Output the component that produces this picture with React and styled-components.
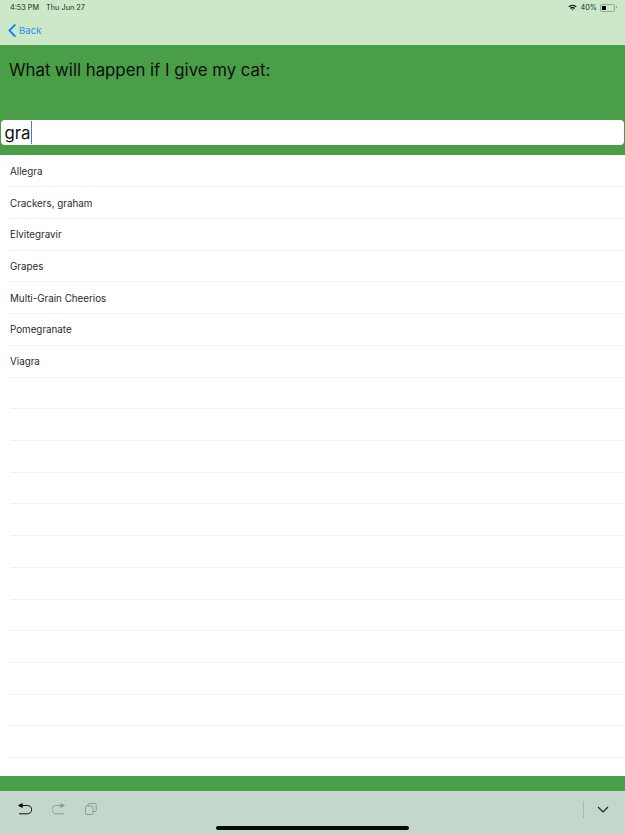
import styled, { createGlobalStyle } from "styled-components";

const GlobalStyle = createGlobalStyle`
  html, body {
    margin: 0;
    padding: 0;
    height: 100%;
    overflow: hidden;
    background: #fff;
  }
  body {
    font-family: Inter, "Liberation Sans", sans-serif;
  }
`;

const drugs = [
  "Allegra",
  "Crackers, graham",
  "Elvitegravir",
  "Grapes",
  "Multi-Grain Cheerios",
  "Pomegranate",
  "Viagra",
];
const blankRows = 12;

const App = () => {
  return (
    <Screen>
      <GlobalStyle />
      <TopBar>
        <StatusBar>
          <StatusGroup>
            <span>4:53 PM</span>
            <span>Thu Jun 27</span>
          </StatusGroup>
          <StatusRight>
            <WifiIcon width="9" height="7" viewBox="0 0 11 8">
              <path d="M0.4 2.6 A7.4 7.4 0 0 1 10.6 2.6 L9.4 3.8 A5.7 5.7 0 0 0 1.6 3.8 Z" fill="#111" />
              <path d="M2.4 4.6 A4.6 4.6 0 0 1 8.6 4.6 L7.4 5.8 A2.9 2.9 0 0 0 3.6 5.8 Z" fill="#111" />
              <path d="M4.4 6.6 A1.7 1.7 0 0 1 6.6 6.6 L5.5 7.8 Z" fill="#111" />
            </WifiIcon>
            <span>40%</span>
            <Battery>
              <BatteryFill />
            </Battery>
          </StatusRight>
        </StatusBar>
        <NavBar>
          <BackLink>
            <svg width="8" height="13" viewBox="0 0 8 13" fill="none">
              <path d="M6.8 1 L1.4 6.5 L6.8 12" stroke="#1a84f0" strokeWidth="1.8" strokeLinecap="round" strokeLinejoin="round" />
            </svg>
            Back
          </BackLink>
        </NavBar>
      </TopBar>

      <Header>
        <Title>What will happen if I give my cat:</Title>
        <SearchBox>
          gra
          <Caret />
        </SearchBox>
      </Header>

      <List>
        {drugs.map((name) => (
          <Row key={name}>{name}</Row>
        ))}
        {Array.from({ length: blankRows }).map((_, index) => (
          <Row key={index}>&nbsp;</Row>
        ))}
      </List>

      <GreenStrip />

      <Toolbar>
        <ToolGroup $gap={20}>
          <svg width="14" height="12" viewBox="0 0 14 12" fill="none" stroke="#111" strokeWidth="1">
            <path d="M3 2.5 H9.5 A4 4 0 0 1 9.5 10.8 H1" />
            <path d="M0.6 2.5 L4.2 0.6 V4.4 Z" fill="#111" />
          </svg>
          <svg width="13" height="12" viewBox="0 0 13 12" fill="none" stroke="#8f9c95" strokeWidth="1">
            <path d="M10 2.5 H4 A4 4 0 0 0 4 10.8 H12" />
            <path d="M12.4 2.5 L8.8 0.6 V4.4 Z" fill="#8f9c95" />
          </svg>
          <svg width="12" height="12" viewBox="0 0 12 12" fill="none" stroke="#8f9c95" strokeWidth="1">
            <rect x="0.5" y="3" width="7.5" height="8.5" rx="0.8" />
            <path d="M3 3 V1.4 Q3 0.5 4 0.5 H10.2 Q11.2 0.5 11.2 1.4 V7.6 Q11.2 8.5 10.2 8.5 H8" />
          </svg>
        </ToolGroup>
        <ToolGroup $gap={13}>
          <ToolDivider />
          <svg width="12" height="7" viewBox="0 0 12 7" fill="none">
            <path d="M1 1 L6 6 L11 1" stroke="#222" strokeWidth="1.2" />
          </svg>
        </ToolGroup>
        <HomeBar />
      </Toolbar>
    </Screen>
  );
};
export default App;

const Screen = styled.div`
  width: 625px;
  height: 834px;
  display: flex;
  flex-direction: column;
  overflow: hidden;
`;

const TopBar = styled.div`
  height: 45px;
  background: #cbe9c8;
  flex-shrink: 0;
`;

const StatusBar = styled.div`
  height: 15px;
  display: flex;
  justify-content: space-between;
  align-items: center;
  padding: 0 10px;
  font-size: 7.3px;
  color: #1c2a1c;
`;

const StatusGroup = styled.div`
  display: flex;
  gap: 7px;
`;

const StatusRight = styled.div`
  display: flex;
  align-items: center;
  gap: 3px;
`;

const WifiIcon = styled.svg`
  margin-right: 1px;
`;

const Battery = styled.div`
  position: relative;
  width: 11px;
  height: 4px;
  border: 1px solid #9aa89a;
  border-radius: 2px;
  padding: 1px;
  box-sizing: content-box;

  &::after {
    content: "";
    position: absolute;
    right: -3px;
    top: 1px;
    width: 1px;
    height: 2px;
    background: #9aa89a;
  }
`;

const BatteryFill = styled.div`
  width: 4px;
  height: 100%;
  background: #000;
`;

const NavBar = styled.div`
  height: 30px;
  display: flex;
  align-items: center;
  padding-left: 8px;
`;

const BackLink = styled.div`
  display: flex;
  align-items: center;
  gap: 3px;
  font-size: 9.6px;
  color: #2d8ff0;
`;

const Header = styled.div`
  height: 110px;
  background: #4a9e47;
  flex-shrink: 0;
  display: flex;
  flex-direction: column;
  justify-content: space-between;
  box-sizing: border-box;
  padding: 15px 0 10px;
`;

const Title = styled.div`
  font-size: 16.8px;
  line-height: 20px;
  color: #0b0f0b;
  padding-left: 9px;
`;

const SearchBox = styled.div`
  height: 25px;
  margin: 0 1px;
  background: #fff;
  border-radius: 4px;
  display: flex;
  align-items: center;
  padding-left: 3.5px;
  font-size: 16.8px;
  color: #111;
`;

const Caret = styled.span`
  width: 1.5px;
  height: 23px;
  background: #4f74ee;
`;

const List = styled.div`
  flex: 1;
  background: #fff;
  overflow: hidden;
  padding-top: 0.5px;
`;

const Row = styled.div`
  height: 31.72px;
  box-sizing: border-box;
  margin-left: 10px;
  padding-top: 1px;
  border-bottom: 1px solid #f0f0f0;
  display: flex;
  align-items: center;
  font-size: 9.8px;
  color: #2a2a2a;
`;

const GreenStrip = styled.div`
  height: 15px;
  background: #4a9e47;
  flex-shrink: 0;
`;

const Toolbar = styled.div`
  height: 43px;
  background: #c3d7cb;
  flex-shrink: 0;
  display: flex;
  justify-content: space-between;
  align-items: flex-start;
  padding: 11px 16px 0 18px;
  box-sizing: border-box;
  position: relative;
`;

const ToolGroup = styled.div`
  display: flex;
  align-items: center;
  gap: ${(props) => props.$gap}px;
  height: 14px;
`;

const ToolDivider = styled.div`
  width: 1px;
  height: 17px;
  background: #a9bcb0;
`;

const HomeBar = styled.div`
  position: absolute;
  left: 216px;
  bottom: 4px;
  width: 193px;
  height: 4px;
  border-radius: 2px;
  background: #0a0a0a;
`;
